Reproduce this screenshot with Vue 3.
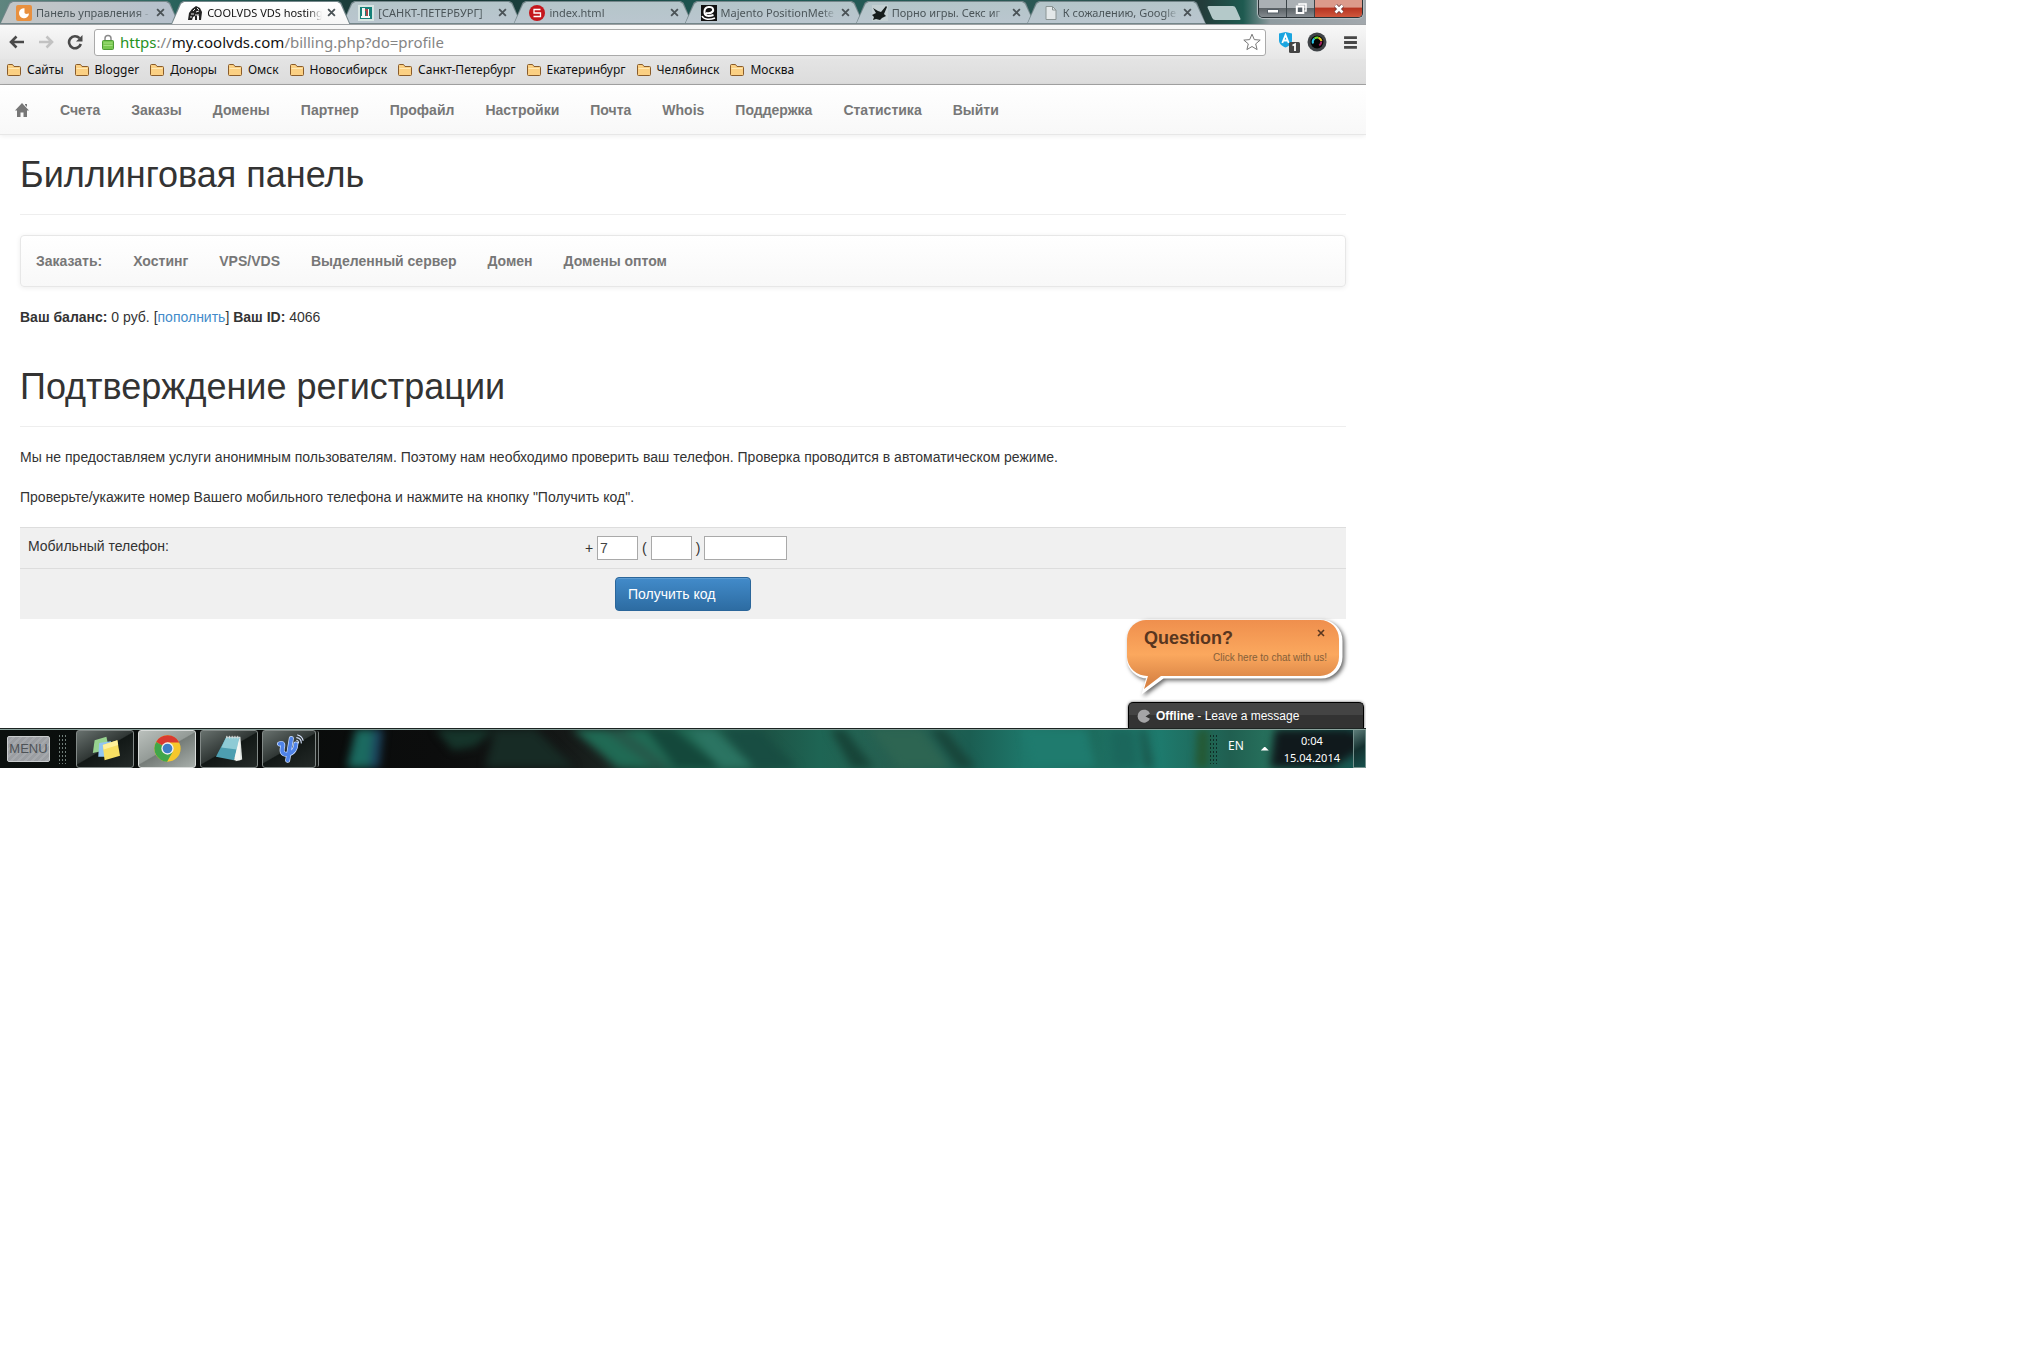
<template>
  <div class="desktop">
    <header class="browser">
      <div class="titlebar">
        <div class="tabs" role="tablist">
          <div v-for="tab in tabs" :key="tab.title" class="tab" :class="{ active: tab.active }" role="tab">
            <svg class="favicon" viewBox="0 0 16 16" aria-hidden="true">
              <template v-if="tab.icon === 'panel'">
                <rect width="16" height="16" rx="2" fill="#e8903f" />
                <path d="M8.500 8V3.200A5 5 0 1 0 13 8.500L10 9z" fill="#fff" />
              </template>
              <template v-else-if="tab.icon === 'cool'">
                <path d="M1 15l1-7 3-4 4-3 4 2 2 4-1 8h-2v-4l-2-1v5H8v-4l-2 1-1 3z" fill="#222" />
                <path d="M6 6l2-2M9 7l3-1M4 9h3M10 3l2 2M8 10h4M3 12h2" stroke="#e8e8e8" stroke-width="1" />
              </template>
              <template v-else-if="tab.icon === 'spb'">
                <rect width="16" height="16" fill="#d7e5e3" />
                <rect x="2" y="2" width="12" height="12" fill="#148078" />
                <path d="M4 3h3v8h5v2H3v-2h1z" fill="#f2f7f6" />
                <path d="M7 4h3v7H8V6H7z" fill="#a8484a" />
                <path d="M10 4h1v7h-1z" fill="#fff" />
              </template>
              <template v-else-if="tab.icon === 'index'">
                <circle cx="8" cy="8" r="8" fill="#c4161c" />
                <path d="M11.500 4.500H5V8h6.500v3.500H4.500" fill="none" stroke="#fff" stroke-width="1.300" />
              </template>
              <template v-else-if="tab.icon === 'majento'">
                <rect width="16" height="16" fill="#111" />
                <path d="M5 8c4 1 8-1 7-4S4 1 3.500 6s3 6 9 4" fill="none" stroke="#fff" stroke-width="2" />
                <path d="M1 11c2 4 8 4 13 2" fill="none" stroke="#fff" stroke-width="1.500" />
              </template>
              <template v-else-if="tab.icon === 'bunny'">
                <rect width="16" height="16" fill="#c3cfd2" />
                <path d="M1 3l5 3 3 1 5-6 1 1-3 7 2 2-4 2-2 2-4-1-3 1 1-3-2-2 4-2z" fill="#161d1c" />
              </template>
              <template v-else>
                <path d="M3 1.500h6.500l3.500 3.500v9.500H3z" fill="#e3e8e9" stroke="#8a9494" />
                <path d="M9.500 1.500V5H13" fill="none" stroke="#8a9494" />
              </template>
            </svg>
            <span class="tab-title">{{ tab.title }}</span>
            <button type="button" class="tab-close" aria-label="Закрыть вкладку">
              <svg viewBox="0 0 8 8"><path d="M1 1l6 6M7 1L1 7" /></svg>
            </button>
          </div>
        </div>
        <button type="button" class="new-tab" aria-label="Новая вкладка"></button>
        <div class="window-controls">
          <button type="button" aria-label="Свернуть">
            <svg viewBox="0 0 14 14"><rect x="1.500" y="7.500" width="11" height="3.500" fill="#fff" stroke="#555e66" /></svg>
          </button>
          <button type="button" aria-label="Развернуть">
            <svg viewBox="0 0 14 14">
              <path d="M5 3V2h7v7h-1.500" fill="none" stroke="#fff" stroke-width="1.500" />
              <rect x="2.800" y="4.500" width="6.500" height="6.500" fill="#555e66" stroke="#fff" stroke-width="2" />
            </svg>
          </button>
          <button type="button" class="win-close" aria-label="Закрыть">
            <svg viewBox="0 0 14 14">
              <path d="M3.500 3.500l7 7M10.500 3.500l-7 7" stroke="#69383a" stroke-width="4" />
              <path d="M3.500 3.500l7 7M10.500 3.500l-7 7" stroke="#fff" stroke-width="2.600" />
            </svg>
          </button>
        </div>
      </div>

      <div class="toolbar">
        <button type="button" class="tool" aria-label="Назад">
          <svg viewBox="0 0 16 16"><path d="M15 8H2.500M7.500 2.500L2 8l5.500 5.500" stroke="#4a4a4a" /></svg>
        </button>
        <button type="button" class="tool" aria-label="Вперёд">
          <svg viewBox="0 0 16 16"><path d="M1 8h12.500M8.500 2.500L14 8l-5.500 5.500" stroke="#c2c2c2" /></svg>
        </button>
        <button type="button" class="tool" aria-label="Обновить">
          <svg viewBox="0 0 16 16">
            <path d="M12.500 4.200A6 6 0 1 0 13.800 10" stroke="#4a4a4a" />
            <path d="M15.500 1v6.500H9z" fill="#4a4a4a" />
          </svg>
        </button>
        <div class="omnibox">
          <svg class="lock" viewBox="0 0 12 16" aria-hidden="true">
            <path d="M3 7V4.500a3 3 0 0 1 6 0V7" fill="none" stroke="#8b8b8b" stroke-width="1.500" />
            <rect x="0.500" y="6.500" width="11" height="9" rx="1" fill="#78c850" stroke="#4d9a35" />
            <path d="M1.500 9h9M1.500 11.500h9" stroke="#a4e080" />
          </svg>
          <span class="url"><span class="scheme">https</span>://<span class="host">my.coolvds.com</span>/billing.php?do=profile</span>
          <button type="button" class="star" aria-label="Добавить в закладки">
            <svg viewBox="0 0 18 18"><path d="M9 1.200l2.300 5.400 5.900.5-4.500 3.800 1.400 5.700L9 13.500l-5.100 3.100 1.400-5.700L.8 7.100l5.900-.5z" /></svg>
          </button>
        </div>
        <button type="button" class="extension" aria-label="Расширение">
          <svg viewBox="0 0 22 22">
            <path d="M1 2.500L7.500 1 14 2.500V9c0 4-3 6-6.500 7.500C4 15 1 13 1 9z" fill="#1aa5e0" />
            <path d="M4.300 12L7.500 4l3.200 8M5.500 9.500h4" fill="none" stroke="#fff" stroke-width="1.800" />
            <rect x="11" y="11" width="11" height="11" rx="1.500" fill="#444" />
            <path d="M14.500 14.500l2.500-1.200V20" fill="none" stroke="#fff" stroke-width="1.800" />
          </svg>
        </button>
        <button type="button" class="extension lens" aria-label="Расширение">
          <svg viewBox="0 0 20 20">
            <circle cx="10" cy="10" r="9.500" fill="#3f4347" />
            <circle cx="10" cy="10" r="6.500" fill="#050505" />
            <path d="M6 11.500A4.500 4.500 0 0 1 7.500 6.500" stroke="#2cc5e8" />
            <path d="M7.500 6.500a5 5 0 0 1 4-.8" stroke="#6edc28" />
            <path d="M11.500 5.700a5 5 0 0 1 3 3.300" stroke="#e8c629" />
            <path d="M14.300 9.500a5 5 0 0 1-2 4" stroke="#a3205f" />
          </svg>
        </button>
        <button type="button" class="menu-button" aria-label="Меню">
          <svg viewBox="0 0 14 14"><path d="M1 2.500h12M1 7h12M1 11.500h12" /></svg>
        </button>
      </div>

      <nav class="bookmarks" aria-label="Закладки">
        <a v-for="name in bookmarks" :key="name" href="#">
          <svg viewBox="0 0 16 14" aria-hidden="true">
            <path d="M1.500 11.500v-9a1 1 0 0 1 1-1h4l1.500 2h5.500a1 1 0 0 1 1 1v7a1 1 0 0 1-1 1h-11a1 1 0 0 1-1-1z" fill="#fbd083" stroke="#8a5c2a" />
            <path d="M2.500 5.500h11" stroke="#ffe9b5" />
          </svg>
          {{ name }}
        </a>
      </nav>
    </header>

    <main class="page">
      <nav class="navbar" aria-label="Главное меню">
        <a href="#" aria-label="Главная">
          <svg class="home" viewBox="0 0 14 14"><path d="M7 0l7 7.500h-2V14H8.500V9.500h-3V14H2V7.500H0L7 0zM10 1h2v3l-2-2z" /></svg>
        </a>
        <a v-for="item in menu" :key="item" href="#">{{ item }}</a>
      </nav>

      <div class="content">
        <h1>Биллинговая панель</h1>

        <nav class="navbar order-bar" aria-label="Заказать">
          <a v-for="item in orders" :key="item" href="#">{{ item }}</a>
        </nav>

        <p class="balance"><b>Ваш баланс:</b> 0 руб. [<a href="#">пополнить</a>] <b>Ваш ID:</b> 4066</p>

        <h1>Подтверждение регистрации</h1>

        <p>Мы не предоставляем услуги анонимным пользователям. Поэтому нам необходимо проверить ваш телефон. Проверка проводится в автоматическом режиме.</p>
        <p>Проверьте/укажите номер Вашего мобильного телефона и нажмите на кнопку "Получить код".</p>

        <form @submit.prevent>
          <table>
            <tbody>
              <tr>
                <td class="label-cell"><label for="country">Мобильный телефон:</label></td>
                <td>
                  <div class="phone">
                    +
                    <input id="country" v-model="phone.country" type="text" aria-label="Код страны" />
                    (
                    <input v-model="phone.area" type="text" aria-label="Код города" />
                    )
                    <input v-model="phone.number" class="number" type="text" aria-label="Номер" />
                  </div>
                </td>
              </tr>
              <tr>
                <td colspan="2" class="submit-cell"><button type="submit" class="submit">Получить код</button></td>
              </tr>
            </tbody>
          </table>
        </form>
      </div>

      <div class="bubble">
        <svg class="bubble-shape" viewBox="0 0 220 78" aria-hidden="true">
          <defs>
            <linearGradient id="bubble-fill" x1="0" y1="0" x2="0" y2="1">
              <stop offset="0" stop-color="#ef8f4d" />
              <stop offset="0.500" stop-color="#fba85e" />
              <stop offset="0.900" stop-color="#d98445" />
            </linearGradient>
          </defs>
          <path d="M20 2h174a20 20 0 0 1 20 20v16a20 20 0 0 1-20 20H36L17 72l4-14A20 20 0 0 1 1 38V22A20 20 0 0 1 20 2z" fill="#fff" stroke="#fff" stroke-width="3" />
          <path d="M20 1h173a19 19 0 0 1 19 19v18a19 19 0 0 1-19 19H34L17 70l4-13A20 20 0 0 1 0 38V20A19 19 0 0 1 20 1z" fill="url(#bubble-fill)" />
        </svg>
        <div class="bubble-text">
          <div class="bubble-head">
            <strong>Question?</strong>
            <button type="button" aria-label="Закрыть">
              <svg viewBox="0 0 8 8"><path d="M1 1l6 6M7 1L1 7" /></svg>
            </button>
          </div>
          <span>Click here to chat with us!</span>
        </div>
      </div>

      <button type="button" class="chat-bar">
        <svg viewBox="0 0 14 14" aria-hidden="true"><path d="M13 4.500A6.500 6.500 0 1 0 13 9.800L8.500 7.500z" fill="#a5a5a7" /></svg>
        <span><b>Offline</b> - Leave a message</span>
      </button>
    </main>

    <footer class="taskbar">
      <svg class="wallpaper" viewBox="0 0 1366 40" preserveAspectRatio="none" aria-hidden="true">
        <path d="M356 0h26l-4 40h-31z" fill="#1b6a60" />
        <path d="M374 0h9l-4 40h-9z" fill="#1c4560" />
        <path d="M435 0h60l-20 18-22 4z" fill="#16352b" />
        <path d="M495 0h40l40 40h-90z" fill="#172b25" />
        <path d="M572 0H700l60 40H618z" fill="#206a54" />
        <path d="M602 0h20l50 40h-18z" fill="#25594a" />
        <path d="M646 0h28l48 40h-46z" fill="#14483b" />
        <path d="M688 0h26l40 40h-34z" fill="#2b7462" />
        <path d="M722 0h36l40 40h-44z" fill="#184d42" />
        <path d="M830 0h14l30 40h-22z" fill="#174438" />
        <path d="M870 0h50l30 40h-50z" fill="#2d6552" />
        <path d="M930 0h14l32 40h-18z" fill="#18453a" />
        <path d="M1024 0h62l10 40h-66z" fill="#1f7b6e" />
        <path d="M1110 0h24l4 40h-26z" fill="#1b675c" />
        <path d="M1140 0h5l8 40h-8z" fill="#195248" />
        <path d="M1198 0h10v40h-12z" fill="#25572f" />
        <path d="M1275 0h74l17 10v8l-34 22h-62z" fill="#10191c" />
      </svg>
      <button type="button" class="start">MENU</button>
      <div class="grip"></div>
      <div class="apps">
        <button type="button" class="app" aria-label="Записки">
          <svg viewBox="0 0 32 32">
            <path d="M4 7l13-4 3 14-18 4z" fill="#97d28f" />
            <path d="M9 10l13-2 2 17H8z" fill="#92c5f0" />
            <path d="M13 12l16-5 3 17-17 5z" fill="#f8df62" />
            <path d="M13 12l16-5 1 5-16 5z" fill="#fff09a" />
          </svg>
        </button>
        <button type="button" class="app current" aria-label="Chrome">
          <svg viewBox="0 0 32 32">
            <circle cx="16" cy="16" r="14.500" fill="#f6c72c" />
            <path d="M16 16L3.500 8.700A14.500 14.500 0 0 1 29 9.500H16z" fill="#d93a30" />
            <path d="M16 16l5.500 4-6 10.500A14.500 14.500 0 0 1 3.500 8.700z" fill="#41a64a" />
            <circle cx="16" cy="16" r="6.800" fill="#f2f2f2" />
            <circle cx="16" cy="16" r="5.300" fill="#3f7fc7" />
          </svg>
        </button>
        <button type="button" class="app" aria-label="Блокнот">
          <svg viewBox="0 0 32 32">
            <path d="M12 3h16l2 25-7 2z" fill="#dfe4e2" />
            <path d="M12 4h15l-6 25-20-4z" fill="#4d9eb0" />
            <path d="M12 4h15l-3 13-17-2z" fill="#8fcbd5" />
            <path d="M21 29l6-25 1 25z" fill="#f7f7f3" />
            <path d="M13 2v3M16 2v3M19 2v3M22 2v3M25 2v3" stroke="#ddd" />
          </svg>
        </button>
        <button type="button" class="app grouped" aria-label="Psi">
          <svg viewBox="0 0 32 32" fill="none" stroke-linecap="round">
            <g stroke="#cfe0ff" stroke-width="5.500">
              <path d="M5 11c4-2 4 1 3 5-1 6 3 7 7 6 5-1 8-6 8-11M18 5l-4 24" />
            </g>
            <g stroke="#4f83e8" stroke-width="4">
              <path d="M5 11c4-2 4 1 3 5-1 6 3 7 7 6 5-1 8-6 8-11M18 5l-4 24" />
            </g>
            <path d="M24 7a3 3 0 0 1 2 3M24 4a6 6 0 0 1 5 6M25 1a8 8 0 0 1 6 6" stroke="#d9e5ff" stroke-width="1.200" />
          </svg>
        </button>
      </div>
      <div class="tray">
        <div class="grip"></div>
        <span class="language">EN</span>
        <button type="button" class="tray-arrow" aria-label="Отображать скрытые значки"></button>
        <div class="clock">
          <time>0:04</time>
          <time>15.04.2014</time>
        </div>
        <button type="button" class="show-desktop" aria-label="Свернуть все окна"></button>
      </div>
    </footer>
  </div>
</template>

<script setup>
import { reactive } from 'vue'

const tabs = [
  { title: 'Панель управления -', icon: 'panel' },
  { title: 'COOLVDS VDS hosting', icon: 'cool', active: true },
  { title: '[САНКТ-ПЕТЕРБУРГ]', icon: 'spb' },
  { title: 'index.html', icon: 'index' },
  { title: 'Majento PositionMete', icon: 'majento' },
  { title: 'Порно игры. Секс иг', icon: 'bunny' },
  { title: 'К сожалению, Google', icon: 'file' },
]

const bookmarks = [
  'Сайты',
  'Blogger',
  'Доноры',
  'Омск',
  'Новосибирск',
  'Санкт-Петербург',
  'Екатеринбург',
  'Челябинск',
  'Москва',
]

const menu = [
  'Счета',
  'Заказы',
  'Домены',
  'Партнер',
  'Профайл',
  'Настройки',
  'Почта',
  'Whois',
  'Поддержка',
  'Статистика',
  'Выйти',
]

const orders = ['Заказать:', 'Хостинг', 'VPS/VDS', 'Выделенный сервер', 'Домен', 'Домены оптом']

const phone = reactive({
  country: '7',
  area: '',
  number: '',
})
</script>

<style>
body {
  background: #fff;
}
</style>

<style scoped>
* {
  box-sizing: border-box;
}

button {
  padding: 0;
  border: 0;
  background: none;
  font: inherit;
  color: inherit;
  cursor: pointer;
}

svg {
  display: block;
  flex: none;
}

.desktop {
  max-width: 1366px;
  overflow: hidden;
  color: #333;
  font: 14px/20px 'Liberation Sans', Arial, sans-serif;
}

/* browser chrome */
.browser {
  color: #111;
  font-family: 'Noto Sans', 'Open Sans', sans-serif;
}

.titlebar {
  display: flex;
  height: 24px;
  background: linear-gradient(90deg, #5f857f, #255f59 14%, #17312f 30%, #1d5a55 55%, #2c5754 78%, #233c3a 88%, #1e5a50 91%, #8f9ba0 93%, #a2a8ad);
}

.tabs {
  display: flex;
  flex: 1;
  min-width: 0;
  padding-right: 8px;
}

.tab {
  position: relative;
  display: flex;
  flex: 1 1 0;
  align-items: center;
  min-width: 0;
  margin-right: -8px;
  padding: 1px 12px 0 16px;
  color: #4b5559;
  font-size: 11px;
  z-index: 0;
}

.tab::before,
.tab::after {
  content: '';
  position: absolute;
  inset: 1px 0 0;
  clip-path: polygon(0 100%, 9px 8%, 12px 0, calc(100% - 12px) 0, calc(100% - 9px) 8%, 100% 100%);
  background: #74868a;
  z-index: -1;
}

.tab::after {
  inset: 2px 1px 1px;
  background: linear-gradient(#b4c5c9, #bac6cf);
}

.tab:first-child::after {
  background: linear-gradient(90deg, #c3c6c6, #b5c0cc);
}

.tab.active {
  color: #111;
  z-index: 1;
}

.tab.active::after {
  inset: 2px 1px 0;
  background: linear-gradient(#fff, #f6f6f6);
}

.favicon {
  width: 16px;
  height: 16px;
}

.tab-title {
  flex: 1;
  min-width: 0;
  margin-left: 4px;
  overflow: hidden;
  white-space: nowrap;
  mask-image: linear-gradient(90deg, #000 88%, transparent);
}

.tab-close {
  margin: 0 2px 0 5px;
}

.tab-close svg {
  width: 9px;
  height: 9px;
  fill: none;
  stroke: #4a5256;
  stroke-width: 1.6;
}

.new-tab {
  width: 28px;
  height: 14px;
  margin: 6px 20px 0 4px;
  border-radius: 2px;
  background: #b4c9c9;
  transform: skewX(24deg);
}

.window-controls {
  display: flex;
  height: 18px;
  margin-right: 3px;
  border: 1px solid #2a3236;
  border-top: 0;
  border-radius: 0 0 5px 5px;
  overflow: hidden;
  box-shadow: 0 0 1px 1px #b9c0c4;
}

.window-controls button {
  display: grid;
  place-items: center;
  width: 28px;
  border-right: 1px solid #3b4448;
  background: linear-gradient(#aab0b4 45%, #5c6367 50%, #858b90);
}

.window-controls .win-close {
  width: 47px;
  border-right: 0;
  background: linear-gradient(#dc9a8b 40%, #b73522 50%, #d0573d);
}

.window-controls svg {
  width: 14px;
  height: 14px;
}

.toolbar {
  display: flex;
  align-items: center;
  height: 35px;
  padding: 0 8px 0 9px;
  border-top: 1px solid #9da1a4;
  background: linear-gradient(#f8f8f8, #e6e6e6);
}

.tool {
  margin-right: 13px;
}

.tool svg {
  width: 16px;
  height: 16px;
  fill: none;
  stroke-width: 2.6;
}

.omnibox {
  display: flex;
  flex: 1;
  align-items: center;
  height: 27px;
  margin-right: 12px;
  margin-left: -2px;
  padding: 0 4px 0 7px;
  border: 1px solid #aaa;
  border-radius: 3px;
  background: #fff;
}

.lock {
  width: 12px;
  height: 16px;
}

.url {
  flex: 1;
  margin-left: 6px;
  color: #858585;
  font-size: 15px;
}

.scheme {
  color: #26921e;
}

.host {
  color: #111;
}

.star svg {
  width: 18px;
  height: 18px;
  fill: #fff;
  stroke: #777;
}

.extension svg {
  width: 22px;
  height: 22px;
}

.lens {
  margin-left: 7px;
}

.lens svg {
  width: 20px;
  height: 20px;
  fill: none;
  stroke-width: 2;
}

.menu-button {
  margin-left: 16px;
}

.menu-button svg {
  width: 15px;
  height: 15px;
  stroke: #474747;
  stroke-width: 2.6;
}

.bookmarks {
  display: flex;
  gap: 10px;
  align-items: center;
  height: 26px;
  padding: 0 6px 4px;
  border-bottom: 1px solid #a3a3a3;
  background: linear-gradient(#e4e4e4, #dcdcdc);
  font-size: 12px;
  line-height: 20px;
}

.bookmarks a {
  display: flex;
  gap: 5px;
  align-items: center;
  color: #111;
  text-decoration: none;
}

.bookmarks svg {
  width: 16px;
  height: 14px;
}

/* billing page */
.page {
  position: relative;
  padding-bottom: 109px;
  background: #fff;
}

.navbar {
  display: flex;
  gap: 1px;
  height: 50px;
  border-bottom: 1px solid #e7e7e7;
  background: linear-gradient(#fff, #f8f8f8);
  box-shadow: 0 1px 5px rgba(0, 0, 0, 0.075);
}

.navbar a {
  display: flex;
  align-items: center;
  padding: 0 15px;
  color: #777;
  font-weight: 700;
  text-decoration: none;
}

.home {
  width: 14px;
  height: 14px;
  fill: #777;
}

.order-bar {
  height: 52px;
  margin-bottom: 20px;
  border: 1px solid #e7e7e7;
  border-radius: 4px;
}

.content {
  padding: 0 20px;
}

h1 {
  margin: 20px 0;
  padding-bottom: 19px;
  border-bottom: 1px solid #eee;
  font-size: 36px;
  font-weight: 400;
  line-height: 40px;
}

p {
  margin: 0 0 20px;
}

.balance {
  margin-bottom: 40px;
}

.balance a {
  color: #428bca;
  text-decoration: none;
}

table {
  width: 100%;
  border-collapse: collapse;
  background: #f0f0f0;
}

td {
  padding: 8px;
  border-top: 1px solid #ddd;
  vertical-align: top;
}

.label-cell {
  width: 42%;
}

.phone {
  display: flex;
  gap: 4px;
  align-items: center;
  height: 24px;
}

.phone input {
  width: 41px;
  height: 24px;
  padding: 1px 2px;
  border: 1px solid #a9a9a9;
  background: #fff;
  color: #444;
  font: inherit;
}

.phone .number {
  width: 83px;
}

.submit-cell {
  text-align: center;
}

.submit {
  width: 136px;
  height: 34px;
  padding: 0 12px;
  border: 1px solid #2b669a;
  border-radius: 4px;
  background: linear-gradient(#428bca, #2d6ca2);
  box-shadow: inset 0 1px 0 rgba(255, 255, 255, 0.15);
  color: #fff;
  text-align: left;
  vertical-align: top;
}

/* chat widget floats over the page corner */
.bubble {
  position: absolute;
  right: 19px;
  bottom: 31px;
  width: 220px;
  height: 78px;
}

.bubble-shape {
  position: absolute;
  inset: 0;
  filter: drop-shadow(2px 2px 2px rgba(0, 0, 0, 0.6));
}

.bubble-text {
  position: relative;
  display: flex;
  flex-direction: column;
  padding: 9px 20px 0 17px;
  color: #866039;
  font-size: 10px;
}

.bubble-head {
  display: flex;
  justify-content: space-between;
  align-items: flex-start;
  color: #58361f;
  font-size: 18px;
}

.bubble-head svg {
  width: 8px;
  height: 8px;
  margin: 1px 2px;
  fill: none;
  stroke: #58361f;
  stroke-width: 1.6;
}

.bubble-text > span {
  align-self: flex-end;
}

.chat-bar {
  position: absolute;
  right: 2px;
  bottom: 0;
  display: flex;
  gap: 5px;
  align-items: center;
  width: 236px;
  height: 26px;
  padding: 0 8px;
  border: 1px solid #000;
  border-bottom: 0;
  border-radius: 5px 5px 0 0;
  background: linear-gradient(#444 50%, #333 50%);
  box-shadow: 0 0 3px #555;
  color: #fff;
  font-size: 12px;
}

.chat-bar svg {
  width: 14px;
  height: 14px;
}

/* taskbar */
.taskbar {
  position: relative;
  display: flex;
  align-items: center;
  height: 40px;
  padding-left: 7px;
  border-top: 1px solid #1c2422;
  background: linear-gradient(90deg, #0b100e 0%, #080b0a 17%, #0c0d0d 32%, #141716 41%, #1a221f 44%, #1e604d 50%, #1d5345 56%, #1e6554 60%, #285f50 66%, #1b5e52 71%, #1e776a 75%, #1d6c5e 80%, #1e7a6d 85%, #205f50 90%, #27715d 93%, #155450 100%);
  overflow: hidden;
  color: #fff;
  font-family: 'Noto Sans', 'Open Sans', sans-serif;
  font-size: 12px;
  isolation: isolate;
}

.taskbar::after {
  content: '';
  position: absolute;
  inset: 0 0 auto;
  height: 1px;
  background: #8aa39d;
}

.wallpaper {
  position: absolute;
  inset: 0;
  width: 100%;
  height: 100%;
  filter: blur(4px);
  z-index: -1;
}

.start {
  width: 43px;
  height: 26px;
  border: 1px solid #c9cccd;
  border-radius: 2px;
  background: repeating-linear-gradient(135deg, #9b9ea2 0 3px, #a5a8ac 3px 5px);
  color: #4e5357;
  font: 13px/24px 'Liberation Sans', Arial, sans-serif;
}

.grip {
  width: 9px;
  height: 30px;
  background: radial-gradient(circle, #6f7d78 1px, transparent 1px) 0 0 / 3px 4px;
}

.start + .grip {
  margin: 0 9px 0 8px;
}

.apps {
  display: flex;
  gap: 4px;
}

.app {
  display: grid;
  place-items: center;
  width: 58px;
  height: 38px;
  border: 1px solid #828987;
  border-radius: 3px;
  background: linear-gradient(150deg, #68716e, #303735 48%, #121816 50%, #242a28);
}

.app.current {
  border-color: #d8dbd9;
  background: linear-gradient(150deg, #bac0bc, #949b97 48%, #757c78 50%, #a8afab);
}

.app.grouped {
  width: 54px;
  box-shadow: 2px 0 0 #151917, 4px 0 0 -1px #7c8280;
}

.app svg {
  width: 29px;
  height: 29px;
}

.tray {
  display: flex;
  align-items: center;
  align-self: stretch;
  margin-left: auto;
}

.tray .grip {
  background: radial-gradient(circle, #0f2c26 1px, transparent 1px) 0 0 / 3px 4px;
}

.language {
  margin: 0 17px 5px 10px;
}

.tray-arrow {
  width: 8px;
  height: 4px;
  background: #fff;
  clip-path: polygon(50% 0, 100% 100%, 0 100%);
}

.clock {
  display: flex;
  flex-direction: column;
  align-items: center;
  margin: 0 13px 0 15px;
  font-size: 11px;
  line-height: 17px;
}

.show-desktop {
  align-self: stretch;
  width: 13px;
  border: 1px solid #75918d;
  background: linear-gradient(150deg, #5c7c79, #14302f 50%, #17504c);
}
</style>
